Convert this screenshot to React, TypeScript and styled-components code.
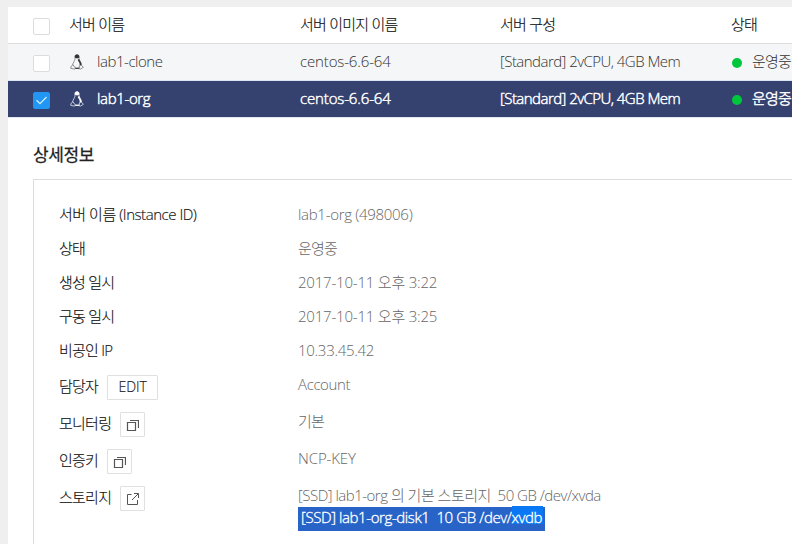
import React from 'react';
import styled, { createGlobalStyle } from 'styled-components';

const GlobalStyle = createGlobalStyle`
  *, *::before, *::after { box-sizing: border-box; }
  body {
    margin: 0;
    background: #efefef;
    overflow: hidden;
    font-family: "Open Sans", "Noto Sans CJK KR", sans-serif;
    font-size: 15px;
    font-weight: 300;
    color: #222;
  }
`;

const Page = styled.main`
  height: 544px;
  padding: 7px 0 0 8px;
  overflow: hidden;
`;

const Sheet = styled.div`
  height: 537px;
  background: #fff;
`;

const Row = styled.div<{ $tone: 'head' | 'plain' | 'selected' }>`
  display: grid;
  grid-template-columns: 36px 231px 200px 231px 1fr;
  align-items: center;
  height: 37px;
  padding-left: 25px;
  white-space: nowrap;
  line-height: 20px;
  border-bottom: 1px solid ${(p) => (p.$tone === 'head' ? '#dcdcdc' : p.$tone === 'plain' ? '#dbe5f4' : '#e4e8ef')};
  background: ${(p) => (p.$tone === 'head' ? '#fff' : p.$tone === 'plain' ? '#f5f6f8' : '#35426f')};
  color: ${(p) => (p.$tone === 'head' ? '#111' : p.$tone === 'plain' ? '#333' : '#fff')};
  -webkit-text-stroke: ${(p) => (p.$tone === 'selected' ? '0.45px #fff' : p.$tone === 'head' ? '0.15px #111' : '0')};
`;

const Cell = styled.div`
  display: flex;
  align-items: center;
  height: 20px;
  margin-top: -3px;
`;

const Text = styled.span<{ $track?: number }>`
  letter-spacing: ${(p) => p.$track ?? -0.75}px;
  white-space: pre;
`;

const Checkbox = styled.span<{ $on?: boolean }>`
  display: flex;
  align-items: center;
  justify-content: center;
  width: 17px;
  height: 17px;
  margin-top: 3px;
  border: 1px solid ${(p) => (p.$on ? '#2196f3' : '#dcdcdc')};
  border-radius: 2px;
  background: ${(p) => (p.$on ? '#2196f3' : '#fff')};
`;

const TuxSlot = styled.span`
  display: flex;
  width: 28px;
  padding: 2px 0 0 1px;
`;

const Dot = styled.i`
  width: 10px;
  height: 10px;
  margin: 4px 10px 0 1px;
  border-radius: 50%;
  background: #00c73c;
`;

const Heading = styled.h2`
  margin: 0;
  padding: 24px 0 0 25px;
  height: 61px;
  font-size: 17px;
  font-weight: 400;
  line-height: 26px;
  -webkit-text-stroke: 0.25px #222;
`;

const Details = styled.dl`
  display: grid;
  grid-template-columns: 239px 1fr;
  grid-template-rows: repeat(5, 34px) repeat(4, 37px);
  margin: 0 0 0 25px;
  height: 400px;
  padding: 17px 0 0 25px;
  border: solid #dcdcdc;
  border-width: 1px 0 0 1px;
  white-space: nowrap;
`;

const Label = styled.dt`
  display: flex;
  align-items: center;
  color: #111;
  line-height: 20px;
  -webkit-text-stroke: 0.15px #111;
`;

const Value = styled.dd`
  margin: 0;
  padding-top: 7px;
  line-height: 20px;
  color: #666;
`;

const Button = styled.button<{ $wide?: boolean }>`
  display: flex;
  align-items: center;
  justify-content: center;
  width: ${(p) => (p.$wide ? 51 : 25)}px;
  height: 25px;
  margin: 3px 0 0 9px;
  padding: 0;
  border: 1px solid #e0e0e0;
  border-radius: 1px;
  background: #fff;
  font: inherit;
  font-size: 14px;
  line-height: 20px;
  letter-spacing: -0.1px;
  color: #222;
`;

const Selection = styled.div`
  display: flex;
  align-items: flex-start;
  width: 247px;
  height: 24px;
  margin-top: 2px;
  padding-left: 3px;
  background: #2864c8;
  color: #fff;
  -webkit-text-stroke: 0.35px #fff;
`;

const Marked = styled.span`
  width: 31px;
  height: 18px;
  margin-top: -1px;
  padding-top: 1px;
  background: #0a78f5;
`;

const Tux = ({ light = false }: { light?: boolean }) => {
  const ink = light ? '#fff' : '#333';
  const soft = light ? '#e4e8f5' : '#777';
  const belly = light ? '#35426f' : '#f5f6f8';
  return (
    <svg width="14" height="16" viewBox="0 0 14 16" fill="none">
      <path d="M5 2.700C5 1.300 5.800.6 7 .6s2 .8 2 2.200v2c.3 1.700 2.200 3.200 2.400 5.700l-1 3.500H4l-1.300-3C2.800 8.700 4.700 7 5 5.200Z" fill={belly} stroke={soft} strokeWidth="0.8" />
      <path d="M4.800 3.600V2.500C4.800 1.200 5.800.5 7 .5s2.200.7 2.200 1.900v1.400L7 4.500Z" fill={ink} />
      <path d="M9.100 4.800c.4 2 2.500 3.500 2.500 6.400l-1.900.4C10 9 8.500 7.600 7.700 6.100Z" fill={ink} />
      <path d="m2.900 10.800 2.600 3.300-1.100 1L.7 14.300l.5-2.100ZM11.200 11l2.200 2.300-3 1.800-1.200-.3.200-3Z" fill={belly} stroke={soft} strokeWidth="0.8" />
      <path d="M5.300 14.400h3.800" stroke={ink} />
    </svg>
  );
};

const CheckMark = () => (
  <svg width="13" height="11" viewBox="0 0 13 11" fill="none">
    <path d="m1.500 5.300 3.500 3.400 6.500-6.700" stroke="#d8f0ff" strokeWidth="1.2" />
  </svg>
);

const CopyIcon = () => (
  <svg width="13" height="13" viewBox="0 0 13 13" fill="none" stroke="#555">
    <path d="M1.500 4.500h8v8h-8zM4 2.500h8.500V10" strokeWidth="1.200" />
  </svg>
);

const OpenIcon = () => (
  <svg width="13" height="13" viewBox="0 0 13 13" fill="none" stroke="#555">
    <path d="M5.500 2.500h-4v10h10V8M6 8l6-6M8 1.500h4.500V6" />
  </svg>
);

const servers = [
  { name: 'lab1-clone', track: -0.45, selected: false },
  { name: 'lab1-org', track: -0.35, selected: true },
];

const info = [
  { label: '서버 이름 (Instance ID)', labelTrack: -0.46, value: 'lab1-org (498006)', track: -0.3 },
  { label: '상태', value: '운영중' },
  { label: '생성 일시', value: '2017-10-11 오후 3:22', track: -0.2 },
  { label: '구동 일시', value: '2017-10-11 오후 3:25', track: -0.2 },
  { label: '비공인 IP', value: '10.33.45.42', track: -0.28 },
  { label: '담당자', value: 'Account', track: -0.38, action: 'edit' },
  { label: '모니터링', value: '기본', action: 'copy' },
  { label: '인증키', value: 'NCP-KEY', track: -0.12, action: 'copy' },
];

export default function App() {
  return (
    <Page>
      <GlobalStyle />
      <Sheet>
        <Row $tone="head">
          <Checkbox />
          <Cell><Text>서버 이름</Text></Cell>
          <Cell><Text>서버 이미지 이름</Text></Cell>
          <Cell><Text>서버 구성</Text></Cell>
          <Cell><Text>상태</Text></Cell>
        </Row>
        {servers.map((s) => (
          <Row key={s.name} $tone={s.selected ? 'selected' : 'plain'}>
            <Checkbox $on={s.selected}>{s.selected && <CheckMark />}</Checkbox>
            <Cell>
              <TuxSlot><Tux light={s.selected} /></TuxSlot>
              <Text $track={s.track}>{s.name}</Text>
            </Cell>
            <Cell><Text $track={-0.14}>centos-6.6-64</Text></Cell>
            <Cell><Text $track={-0.54}>[Standard] 2vCPU, 4GB Mem</Text></Cell>
            <Cell><Dot /><Text>운영중</Text></Cell>
          </Row>
        ))}
        <Heading><Text $track={-0.35}>상세정보</Text></Heading>
        <Details>
          {info.map((d) => (
            <React.Fragment key={d.label}>
              <Label>
                <Text $track={d.labelTrack}>{d.label}</Text>
                {d.action === 'edit' && <Button $wide>EDIT</Button>}
                {d.action === 'copy' && <Button><CopyIcon /></Button>}
              </Label>
              <Value><Text $track={d.track}>{d.value}</Text></Value>
            </React.Fragment>
          ))}
          <Label>
            <Text>스토리지</Text>
            <Button><OpenIcon /></Button>
          </Label>
          <Value>
            <Text $track={-0.5}>{'[SSD] lab1-org 의 기본 스토리지  50 GB /dev/xvda'}</Text>
            <Selection>
              <Text $track={-0.4}>{'[SSD] lab1-org-disk1  10 GB /dev/'}</Text>
              <Marked><Text $track={-0.4}>xvdb</Text></Marked>
            </Selection>
          </Value>
        </Details>
      </Sheet>
    </Page>
  );
}
